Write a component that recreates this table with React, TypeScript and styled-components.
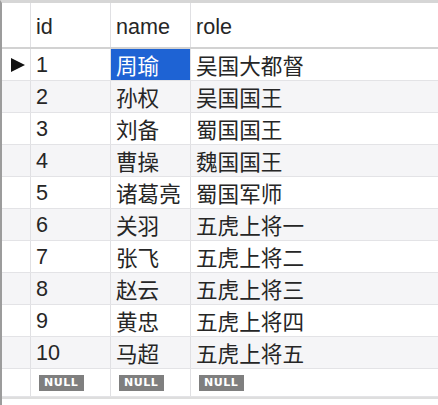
import React from "react";
import styled, { createGlobalStyle } from "styled-components";

const Global = createGlobalStyle`
  html, body { margin: 0; padding: 0; background: #ffffff; }
  body { font-family: "Liberation Sans", "Noto Sans CJK SC", sans-serif; }
`;

const Grid = styled.div`
  width: 438px;
  height: 405px;
  box-sizing: border-box;
  border-left: 2px solid #9c9c9c;
  border-top: 3px solid #d6d6d6;
  display: flex;
  flex-direction: column;
  background: #fff;
  overflow: hidden;
`;

const Row = styled.div<{ $h: number; $alt?: boolean; $header?: boolean }>`
  display: grid;
  grid-template-columns: 29px 80px 80px 1fr;
  height: ${(p) => p.$h}px;
  box-sizing: border-box;
  background: ${(p) => (p.$alt ? "#f5f5f7" : "#ffffff")};
  border-bottom: ${(p) => (p.$header ? "2px solid #d2d2d2" : "1px solid #e3e3e6")};
`;

const Cell = styled.div<{ $sep?: boolean; $selected?: boolean; $header?: boolean }>`
  display: flex;
  align-items: center;
  padding-left: 5px;
  box-sizing: border-box;
  border-right: ${(p) => (p.$sep ? "1px solid #e0e0e3" : "none")};
  font-size: 21.6px;
  color: ${(p) => (p.$selected ? "#ffffff" : "#262626")};
  background: ${(p) => (p.$selected ? "#1e63d4" : "transparent")};
  white-space: nowrap;
  padding-top: ${(p) => (p.$header ? "4px" : "0")};
`;

const Indicator = styled.div`
  display: flex;
  align-items: center;
  padding-left: 9px;
  border-right: 1px solid #e0e0e3;
  box-sizing: border-box;
`;

const NullBadge = styled.span`
  display: inline-block;
  background: #7f7f7f;
  color: #ffffff;
  font-family: "DejaVu Sans", sans-serif;
  font-weight: bold;
  font-size: 11px;
  line-height: 16px;
  padding: 0 6px 0 5px;
  letter-spacing: 0.5px;
  margin-left: 3px;
`;

const Footer = styled.div`
  flex: 1;
  border-top: 2px solid #dedede;
  background: #ffffff;
`;

const rows: [string, string, string][] = [
  ["1", "周瑜", "吴国大都督"],
  ["2", "孙权", "吴国国王"],
  ["3", "刘备", "蜀国国王"],
  ["4", "曹操", "魏国国王"],
  ["5", "诸葛亮", "蜀国军师"],
  ["6", "关羽", "五虎上将一"],
  ["7", "张飞", "五虎上将二"],
  ["8", "赵云", "五虎上将三"],
  ["9", "黄忠", "五虎上将四"],
  ["10", "马超", "五虎上将五"],
];

const Arrow = () => (
  <svg width="14" height="14" viewBox="0 0 14 14">
    <polygon points="0,0 14,7 0,14" fill="#111" />
  </svg>
);

export default function App() {
  return (
    <>
      <Global />
      <Grid>
        <Row $h={46} $header>
          <Indicator />
          <Cell $sep $header>id</Cell>
          <Cell $sep $header>name</Cell>
          <Cell $header>role</Cell>
        </Row>
        {rows.map(([id, name, role], i) => (
          <Row key={id} $h={32} $alt={i % 2 === 1}>
            <Indicator>{i === 0 ? <Arrow /> : null}</Indicator>
            <Cell $sep>{id}</Cell>
            <Cell $sep $selected={i === 0}>{name}</Cell>
            <Cell>{role}</Cell>
          </Row>
        ))}
        <Row $h={28}>
          <Indicator />
          <Cell $sep><NullBadge>NULL</NullBadge></Cell>
          <Cell $sep><NullBadge>NULL</NullBadge></Cell>
          <Cell><NullBadge>NULL</NullBadge></Cell>
        </Row>
        <Footer />
      </Grid>
    </>
  );
}
